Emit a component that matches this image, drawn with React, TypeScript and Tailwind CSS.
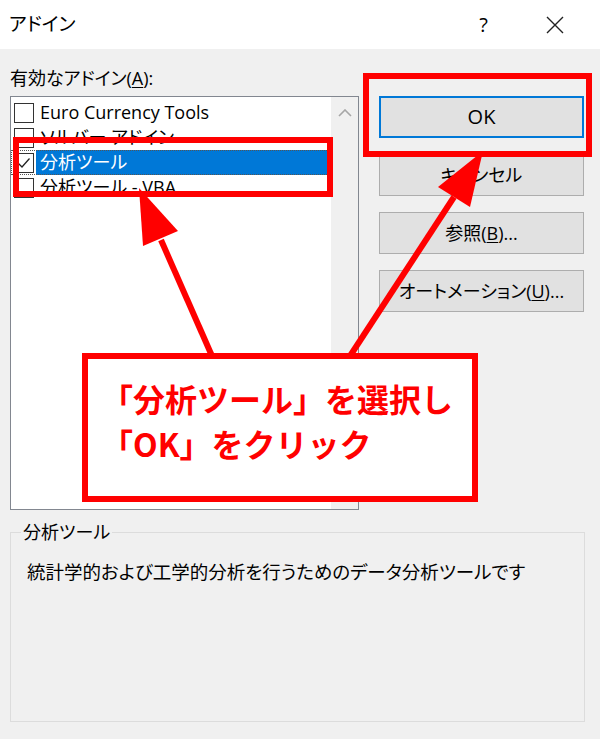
import React from "react";

const jp = "font-['Open_Sans','Noto_Sans_CJK_JP',sans-serif] [font-feature-settings:'palt']";

function Check({ checked }: { checked?: boolean }) {
  return (
    <div className="w-[20px] h-[20px] border border-[#333] bg-white flex items-center justify-center shrink-0">
      {checked && (
        <svg width="16" height="16" viewBox="0 0 16 16">
          <path d="M2.5 8.5 L6 12 L13.5 3.5" fill="none" stroke="#222" strokeWidth="1.3" />
        </svg>
      )}
    </div>
  );
}

function Row({ label, checked, selected }: { label: string; checked?: boolean; selected?: boolean }) {
  return (
    <div className={`h-[25px] flex items-center pl-[3px] ${selected ? "outline outline-1 outline-dotted outline-[#555] -outline-offset-1" : ""}`}>
      <Check checked={checked} />
      <div className={`ml-[2px] flex-1 h-[25px] flex items-center pl-[4px] ${selected ? "bg-[#0078d7] text-white" : "text-black"}`}>
        {label}
      </div>
    </div>
  );
}

function Btn({ children, primary }: { children: React.ReactNode; primary?: boolean }) {
  return (
    <div
      className={`h-[42px] w-[205px] flex items-center justify-center bg-[#e1e1e1] text-[18px] text-black ${
        primary ? "border-2 border-[#0078d7]" : "border border-[#adadad]"
      }`}
    >
      {children}
    </div>
  );
}

export default function App() {
  return (
    <div className={`relative w-[600px] h-[739px] overflow-hidden bg-[#f0f0f0] ${jp}`}>
      {/* title bar */}
      <div className="h-[49px] bg-white flex items-center pl-[9px] text-[19px] text-black">
        <span>アドイン</span>
        <span className="ml-auto mr-[58px] text-[20px]">?</span>
        <svg width="18" height="18" viewBox="0 0 18 18" className="mr-[36px]">
          <path d="M1 1 L17 17 M17 1 L1 17" stroke="#222" strokeWidth="1.4" />
        </svg>
      </div>

      <div className="px-[10px] pt-[17px]">
        <div className="text-[18px] leading-[24px] text-black">
          有効なアドイン(<span className="underline underline-offset-2">A</span>):
        </div>
        <div className="mt-[6px] flex items-start gap-[20px]">
          {/* listbox */}
          <div className="w-[349px] h-[414px] border border-[#828790] bg-white flex">
            <div className="flex-1 pt-[3px] text-[18px]">
              <Row label="Euro Currency Tools" />
              <Row label="ソルバー アドイン" />
              <Row label="分析ツール" checked selected />
              <Row label="分析ツール - VBA" />
            </div>
            <div className="w-[27px] bg-[#f0f0f0] flex justify-center pt-[12px]">
              <svg width="14" height="8" viewBox="0 0 14 8">
                <path d="M1 7 L7 1 L13 7" fill="none" stroke="#a6a6a6" strokeWidth="1.6" />
              </svg>
            </div>
          </div>
          {/* buttons */}
          <div className="flex flex-col gap-[16px]">
            <Btn primary>
              <span className="text-[20px]">OK</span>
            </Btn>
            <Btn>キャンセル</Btn>
            <Btn>
              参照(<span className="underline underline-offset-2">B</span>)...
            </Btn>
            <Btn>
              オートメーション(<span className="underline underline-offset-2">U</span>)...
            </Btn>
          </div>
        </div>

        <fieldset className="mt-[10px] w-[575px] h-[202px] border border-[#dcdcdc] px-[16px]">
          <legend className="ml-[-6px] px-[2px] text-[18px] leading-[24px] text-black">分析ツール</legend>
          <div className="pt-[16px] text-[18.5px] leading-[24px] text-black">
            統計学的および工学的分析を行うためのデータ分析ツールです
          </div>
        </fieldset>
      </div>

      {/* annotation overlays */}
      <div className="absolute left-[13px] top-[137px] w-[320px] h-[60px] border-[6px] border-[#ff0000]" />
      <div className="absolute left-[363px] top-[73px] w-[229px] h-[84px] border-[6px] border-[#ff0000]" />
      <svg className="absolute left-0 top-0" width="600" height="739" viewBox="0 0 600 739">
        <line x1="212" y1="356" x2="161" y2="240" stroke="#ff0000" strokeWidth="6" />
        <polygon points="139,188 143,246 178,231" fill="#ff0000" />
        <line x1="350" y1="356" x2="454" y2="197" stroke="#ff0000" strokeWidth="6" />
        <polygon points="483,151 438,187 470,207" fill="#ff0000" />
      </svg>
      <div className="absolute left-[82px] top-[353px] w-[396px] h-[149px] border-[6px] border-[#ff0000] bg-white pl-[13px] pt-[17px] font-['Noto_Sans_CJK_JP',sans-serif] [font-feature-settings:normal] font-bold text-[32px] leading-[45px] text-[#ff0000]">
        <div>「分析ツール」を選択し</div>
        <div>「OK」をクリック</div>
      </div>
    </div>
  );
}
